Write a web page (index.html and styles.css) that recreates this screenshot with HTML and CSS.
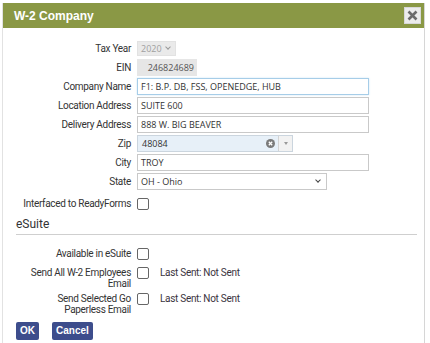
FILE: index.html
```html
<!DOCTYPE html>
<html>
<head>
  <meta charset="UTF-8">
  <title>W-2 Company</title>
  <link rel="stylesheet" href="styles.css">
</head>
<body>
<div class="dialog">
  <!-- Title bar -->
  <div class="titlebar">
    <span class="title">W-2 Company</span>
    <span class="close">
      <svg width="11" height="11" viewBox="0 0 11 11"><path d="M1.5 1.5 L9.5 9.5 M9.5 1.5 L1.5 9.5" stroke="#6b6b6b" stroke-width="2.6"/></svg>
    </span>
  </div>

  <div class="content">
    <div class="form">
      <label>Tax Year</label>
      <div class="field"><span class="select small disabled">2020 <i class="chev"></i></span></div>

      <label>EIN</label>
      <div class="field"><span class="input ein">246824689</span></div>

      <label>Company Name</label>
      <div class="field"><span class="input wide focus">F1: B.P. DB, FSS, OPENEDGE, HUB</span></div>

      <label>Location Address</label>
      <div class="field"><span class="input wide">SUITE 600</span></div>

      <label>Delivery Address</label>
      <div class="field"><span class="input wide">888 W. BIG BEAVER</span></div>

      <label>Zip</label>
      <div class="field">
        <span class="combo">
          <span class="combo-text">48084</span>
          <span class="clear">
            <svg width="9" height="9" viewBox="0 0 9 9"><circle cx="4.5" cy="4.5" r="4.5" fill="#7a7a7a"/><path d="M2.8 2.8 L6.2 6.2 M6.2 2.8 L2.8 6.2" stroke="#fff" stroke-width="1.3"/></svg>
          </span>
          <span class="drop"><i class="tri"></i></span>
        </span>
      </div>

      <label>City</label>
      <div class="field"><span class="input wide">TROY</span></div>

      <label>State</label>
      <div class="field"><span class="select state">OH - Ohio <i class="chev dark"></i></span></div>

      <label class="tall">Interfaced to ReadyForms</label>
      <div class="field tall"><span class="check"></span></div>
    </div>

    <h3 class="section">eSuite</h3>

    <div class="form esuite">
      <label>Available in eSuite</label>
      <div class="field"><span class="check"></span></div>

      <label>Send All W-2 Employees Email</label>
      <div class="field"><span class="check"></span><span class="note">Last Sent: Not Sent</span></div>

      <label>Send Selected Go Paperless Email</label>
      <div class="field"><span class="check"></span><span class="note">Last Sent: Not Sent</span></div>
    </div>

    <div class="buttons">
      <button class="btn">OK</button>
      <button class="btn">Cancel</button>
    </div>
  </div>
</div>
</body>
</html>
```

FILE: styles.css
```css
body {
  margin: 0;
  padding: 0;
  background: #fff;
  font-family: Roboto, "Liberation Sans", Arial, sans-serif;
  font-size: 10px;
  letter-spacing: -0.3px;
  color: #333;
}

.dialog {
  margin: 3px 0 0 2px;
  width: 423px;
  height: 340px;
  border-left: 1px solid #e2e2e2;
  border-right: 1px solid #d6d6d6;
  box-sizing: border-box;
}

/* Title bar */
.titlebar {
  height: 25px;
  background: #8a9845;
  display: flex;
  align-items: center;
  justify-content: space-between;
  padding: 0 3px 0 11px;
}

.title {
  color: #fff;
  font-family: "Liberation Sans", Arial, sans-serif;
  font-weight: bold;
  font-size: 12px;
  letter-spacing: 0;
}

.close {
  width: 17px;
  height: 17px;
  background: #ececec;
  border: 1px solid #d8d8d8;
  box-sizing: border-box;
  display: flex;
  align-items: center;
  justify-content: center;
}

.content {
  padding: 12px 12px 0 0;
}

/* Form grid */
.form {
  display: grid;
  grid-template-columns: 128px 1fr;
  column-gap: 6px;
  row-gap: 2px;
  align-items: center;
}

.form label {
  text-align: right;
  line-height: 12px;
}

.field {
  display: flex;
  align-items: center;
  min-height: 17px;
}

.field.tall {
  min-height: 20px;
  padding-top: 2px;
}

label.tall {
  padding-top: 2px;
}

.input,
.select,
.combo {
  height: 17px;
  box-sizing: border-box;
  border: 1px solid #c9c9c9;
  font-family: "Open Sans", sans-serif;
  font-size: 9px;
  letter-spacing: 0;
  line-height: 15px;
  padding: 0 3px;
  color: #333;
  background: #fff;
}

.wide {
  width: 232px;
}

.focus {
  border-color: #a6cde8;
  box-shadow: 0 0 2px #cfe6f5;
}

.ein {
  width: 60px;
  background: #e6e6e6;
  border-color: #e6e6e6;
  text-align: right;
  color: #555;
  padding-right: 2px;
}

.select {
  display: flex;
  align-items: center;
  justify-content: space-between;
}

.small {
  width: 39px;
  height: 15px;
  line-height: 13px;
  padding: 0 5px 0 3px;
}

.disabled {
  background: #eaeaea;
  border-color: #e2e2e2;
  color: #a0a0a0;
}

.state {
  width: 190px;
  padding-right: 6px;
}

.chev {
  width: 3px;
  height: 3px;
  border-right: 1.5px solid #999;
  border-bottom: 1.5px solid #999;
  transform: rotate(45deg);
  margin-top: -3px;
}

.chev.dark {
  border-color: #444;
}

.combo {
  width: 156px;
  display: flex;
  align-items: center;
  padding: 0 0 0 4px;
  background: #e7f0f8;
  border-color: #cbd5de;
}

.combo-text {
  flex: 1;
}

.clear {
  display: flex;
  margin-right: 3px;
}

.drop {
  width: 13px;
  height: 15px;
  background: #f2f2f2;
  border-left: 1px solid #d3d3d3;
  display: flex;
  align-items: center;
  justify-content: center;
}

.tri {
  border-left: 2.5px solid transparent;
  border-right: 2.5px solid transparent;
  border-top: 3px solid #999;
}

.check {
  width: 12px;
  height: 12px;
  box-sizing: border-box;
  border: 1px solid #666;
  border-radius: 2px;
  background: #fff;
  flex-shrink: 0;
}

.note {
  margin-left: 11px;
  color: #3a3340;
}

/* eSuite section */
.section {
  margin: 2px 0 0 13px;
  padding-bottom: 2px;
  border-bottom: 1px solid #cfcfcf;
  width: 401px;
  font-weight: normal;
  font-size: 12px;
  line-height: 16px;
  letter-spacing: 0;
  color: #333;
}

.esuite {
  margin-top: 13px;
  row-gap: 3px;
  align-items: start;
}

.esuite label {
  line-height: 11.5px;
  padding-left: 20px;
}

.esuite label:first-child {
  margin-bottom: 4px;
}

.esuite .field {
  min-height: 12px;
  align-items: flex-start;
}

.esuite .note {
  line-height: 12px;
}

.buttons {
  display: flex;
  gap: 13px;
  margin: 6px 0 0 13px;
}

.btn {
  height: 18px;
  padding: 0 4px;
  border: none;
  border-radius: 2px;
  background: #3d4d8c;
  color: #fff;
  font-family: "Liberation Sans", Arial, sans-serif;
  font-weight: bold;
  font-size: 10px;
  letter-spacing: 0;
  cursor: pointer;
}
```
